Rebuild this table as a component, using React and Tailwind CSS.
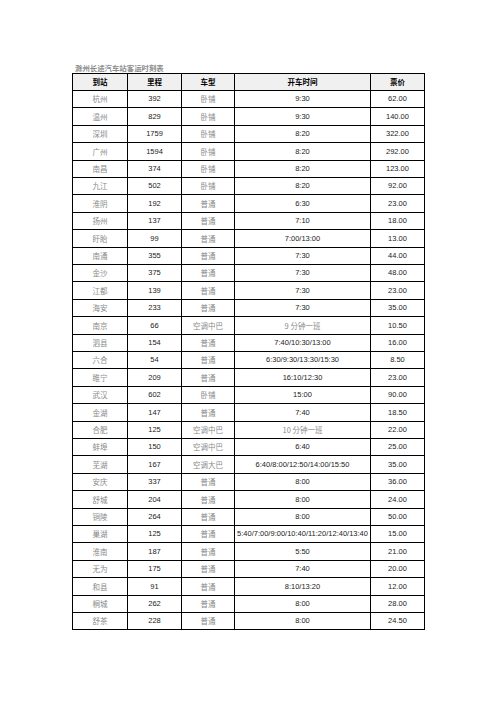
import React from "react";

const rows = [
  ["杭州", "392", "卧铺", "9:30", "62.00"],
  ["温州", "829", "卧铺", "9:30", "140.00"],
  ["深圳", "1759", "卧铺", "8:20", "322.00"],
  ["广州", "1594", "卧铺", "8:20", "292.00"],
  ["南昌", "374", "卧铺", "8:20", "123.00"],
  ["九江", "502", "卧铺", "8:20", "92.00"],
  ["淮阴", "192", "普通", "6:30", "23.00"],
  ["扬州", "137", "普通", "7:10", "18.00"],
  ["盱眙", "99", "普通", "7:00/13:00", "13.00"],
  ["南通", "355", "普通", "7:30", "44.00"],
  ["金沙", "375", "普通", "7:30", "48.00"],
  ["江都", "139", "普通", "7:30", "23.00"],
  ["海安", "233", "普通", "7:30", "35.00"],
  ["南京", "66", "空调中巴", "9 分钟一班", "10.50"],
  ["泗县", "154", "普通", "7:40/10:30/13:00", "16.00"],
  ["六合", "54", "普通", "6:30/9:30/13:30/15:30", "8.50"],
  ["睢宁", "209", "普通", "16:10/12:30", "23.00"],
  ["武汉", "602", "卧铺", "15:00", "90.00"],
  ["金湖", "147", "普通", "7:40", "18.50"],
  ["合肥", "125", "空调中巴", "10 分钟一班", "22.00"],
  ["蚌埠", "150", "空调中巴", "6:40", "25.00"],
  ["芜湖", "167", "空调大巴", "6:40/8:00/12:50/14:00/15:50", "35.00"],
  ["安庆", "337", "普通", "8:00", "36.00"],
  ["舒城", "204", "普通", "8:00", "24.00"],
  ["铜陵", "264", "普通", "8:00", "50.00"],
  ["巢湖", "125", "普通", "5:40/7:00/9:00/10:40/11:20/12:40/13:40", "15.00"],
  ["淮南", "187", "普通", "5:50", "21.00"],
  ["无为", "175", "普通", "7:40", "20.00"],
  ["和县", "91", "普通", "8:10/13:20", "12.00"],
  ["桐城", "262", "普通", "8:00", "28.00"],
  ["舒茶", "228", "普通", "8:00", "24.50"],
];

const widths = ["w-[55px]", "w-[54px]", "w-[53px]", "w-[136px]", "w-[54px]"];
const headers = ["到站", "里程", "车型", "开车时间", "票价"];

const cjk = "font-['Noto_Sans_CJK_SC',sans-serif] text-[#8a8a8a]";
const num = "font-['Liberation_Sans','Noto_Sans_CJK_SC',sans-serif] text-[#222]";

export default function App() {
  return (
    <div className="bg-white min-h-[702px] pl-[72px] pt-[63px]">
      <div className="h-[10px] pl-[3px] text-[7.4px] leading-[10px] font-bold text-[#8c8c8c] font-['Noto_Sans_CJK_SC',sans-serif] whitespace-nowrap">
        滁州长途汽车站客运时刻表
      </div>
      <div className="w-[353px] border-l border-t border-black">
        <div className="flex h-[17px] bg-[#f0f0f0]">
          {headers.map((h, i) => (
            <div
              key={i}
              className={`${widths[i]} h-full border-r border-b border-black flex items-center justify-center text-[7.5px] font-bold text-black font-['Noto_Sans_CJK_SC',sans-serif]`}
            >
              {h}
            </div>
          ))}
        </div>
        {rows.map((r, ri) => {
          const tall = ri % 5 === 1 || ri % 5 === 3;
          return (
            <div key={ri} className={`flex ${tall ? "h-[18px]" : "h-[17px]"}`}>
              {r.map((c, ci) => {
                const isCjk = ci === 0 || ci === 2 || c.includes("分钟");
                return (
                  <div
                    key={ci}
                    className={`${widths[ci]} h-full border-r border-b border-black flex items-center justify-center whitespace-nowrap text-[7.5px] leading-none ${isCjk ? cjk : num}`}
                  >
                    {c}
                  </div>
                );
              })}
            </div>
          );
        })}
      </div>
    </div>
  );
}
